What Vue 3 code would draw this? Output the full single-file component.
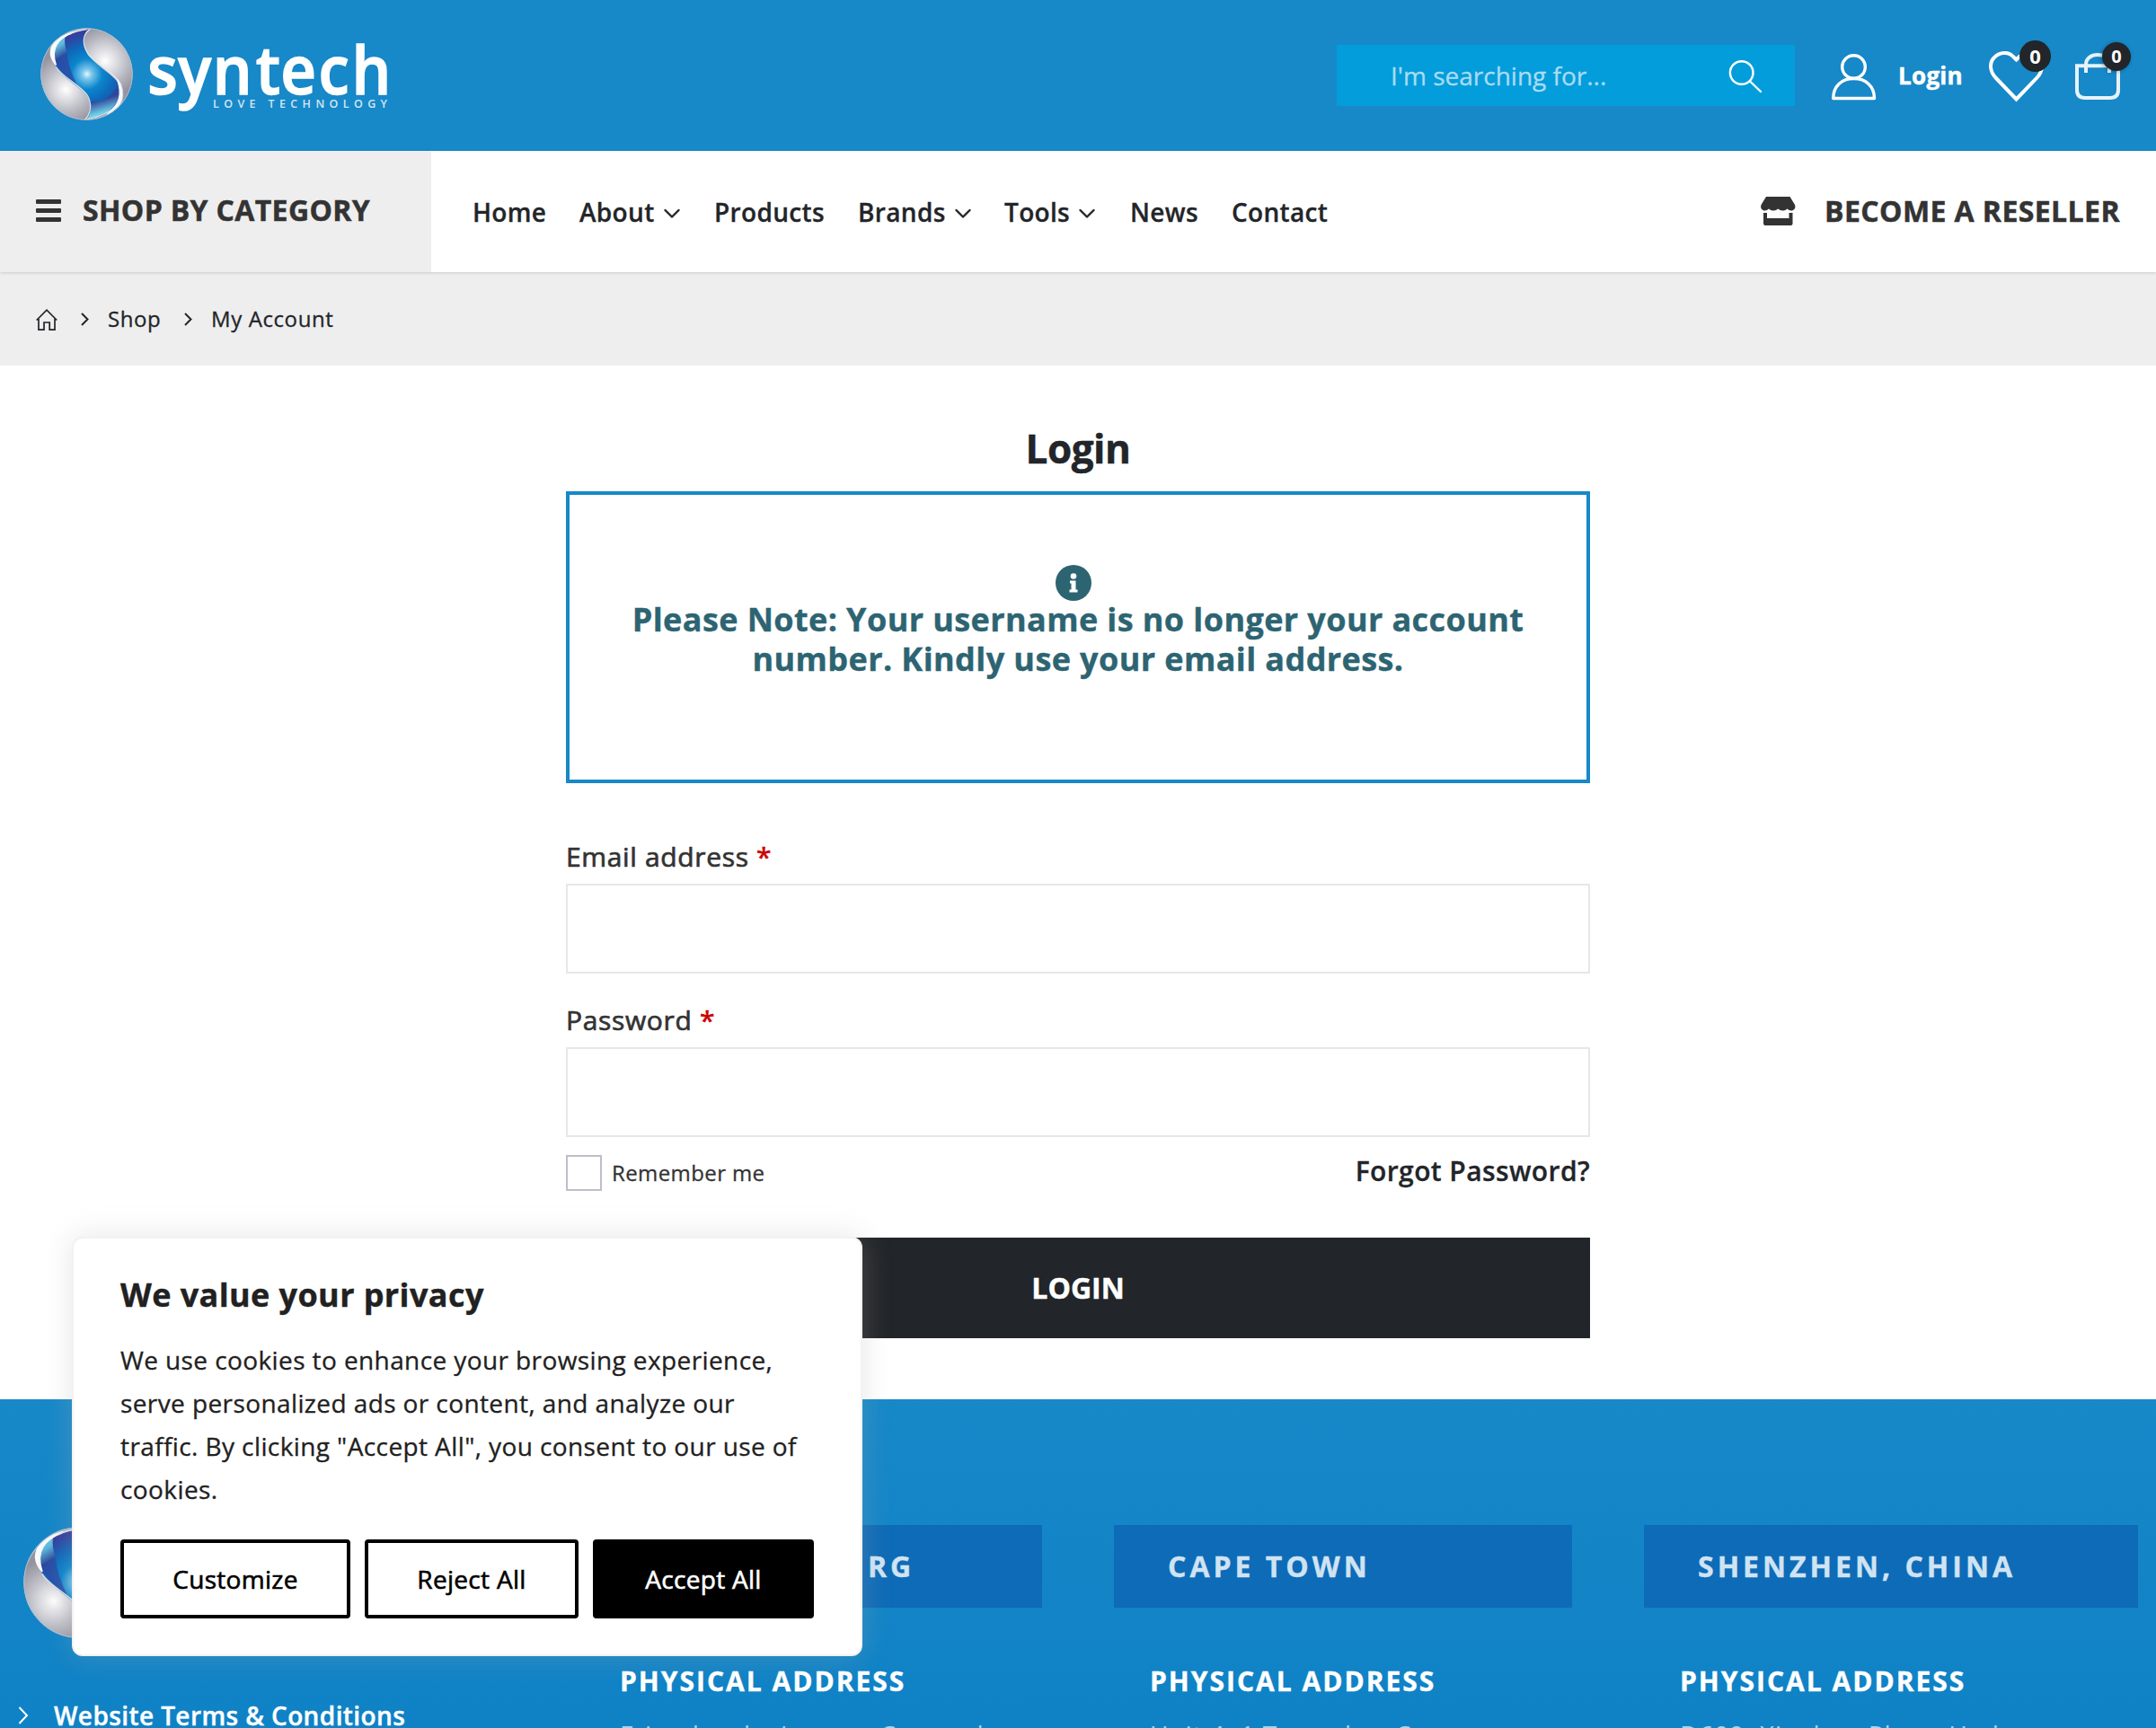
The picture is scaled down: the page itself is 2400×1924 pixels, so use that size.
<script setup>
import { h } from 'vue'

const navItems = [
  { label: 'Home', width: 119 },
  { label: 'About', width: 150, menu: true },
  { label: 'Products', width: 160 },
  { label: 'Brands', width: 163, menu: true },
  { label: 'Tools', width: 140, menu: true },
  { label: 'News', width: 113 },
  { label: 'Contact', width: 110 },
]

const offices = [
  { city: 'JOHANNESBURG', line: 'Friendsanke Inverse Coursed' },
  { city: 'CAPE TOWN', line: 'Unit 4, 1 Topaz law Cor' },
  { city: 'SHENZHEN, CHINA', line: 'D609, Xinghua Plaza, Hed', wide: true },
]

const fields = ['Email address', 'Password']

/* Glossy sphere used in the header and in the footer */
const Sphere = (props) =>
  h('svg', { viewBox: '0 0 308 308', width: props.size, height: props.size }, [
    h('defs', [
      h('radialGradient', { id: props.uid + 'b', cx: '155', cy: '154', r: '135', gradientUnits: 'userSpaceOnUse' }, [
        h('stop', { offset: '0', 'stop-color': '#e4f6ff' }),
        h('stop', { offset: '.12', 'stop-color': '#7cc6ec' }),
        h('stop', { offset: '.38', 'stop-color': '#0a86cd' }),
        h('stop', { offset: '.7', 'stop-color': '#0f66b8' }),
        h('stop', { offset: '1', 'stop-color': '#343f9e' }),
      ]),
      h('radialGradient', { id: props.uid + 'l', cx: '85', cy: '205', r: '120', gradientUnits: 'userSpaceOnUse' }, [
        h('stop', { offset: '0', 'stop-color': '#ffffff' }),
        h('stop', { offset: '.5', 'stop-color': '#c6c6ce' }),
        h('stop', { offset: '1', 'stop-color': '#94939f' }),
      ]),
      h('radialGradient', { id: props.uid + 'r', cx: '215', cy: '110', r: '120', gradientUnits: 'userSpaceOnUse' }, [
        h('stop', { offset: '0', 'stop-color': '#ffffff' }),
        h('stop', { offset: '.5', 'stop-color': '#c9c9d1' }),
        h('stop', { offset: '1', 'stop-color': '#94939f' }),
      ]),
      h('linearGradient', { id: props.uid + 't', x1: '0', y1: '0', x2: '.3', y2: '1' }, [
        h('stop', { offset: '0', 'stop-color': '#7ed5ea' }),
        h('stop', { offset: '.5', 'stop-color': '#5db8dc' }),
        h('stop', { offset: '1', 'stop-color': '#27388f' }),
      ]),
      h('linearGradient', { id: props.uid + 'u', x1: '.4', y1: '0', x2: '.7', y2: '1' }, [
        h('stop', { offset: '0', 'stop-color': '#343f9e' }),
        h('stop', { offset: '.35', 'stop-color': '#30479c' }),
        h('stop', { offset: '.75', 'stop-color': '#6fd0e6' }),
        h('stop', { offset: '1', 'stop-color': '#7ed5ea' }),
      ]),
    ]),
    h('circle', { cx: 154, cy: 154, r: 153, fill: '#b9b9c2' }),
    h('path', { d: 'M150 6C85 18 42 52 36 90C34 145 95 180 130 205C160 225 172 260 155 304C225 300 268 255 268 205C262 165 200 140 170 100C145 70 140 30 165 4Z', fill: `url(#${props.uid}b)` }),
    h('path', { d: 'M84 22C50 42 36 72 46 108C54 122 68 96 88 84C82 60 78 42 84 22Z', fill: `url(#${props.uid}t)` }),
    h('path', { d: 'M88 84C70 90 54 112 54 118C66 152 108 178 125 196L110 165C96 130 92 110 88 84Z', fill: '#3047a2', opacity: '.75' }),
    h('path', { d: 'M254 200C225 242 190 250 164 244C172 264 168 286 155 304C212 296 262 264 264 214Z', fill: `url(#${props.uid}u)` }),
    h('path', { d: 'M165 4C140 22 138 52 158 86C182 122 250 150 270 190C280 214 276 240 272 250C296 225 307 190 307 154C307 74 240 4 165 4Z', fill: `url(#${props.uid}r)` }),
    h('path', { d: 'M36 62C14 85 1 118 1 154C1 236 68 306 148 307C168 284 170 252 156 228C138 200 76 168 56 135C38 108 32 86 36 62Z', fill: `url(#${props.uid}l)` }),
    h('path', { d: 'M165 4C140 22 138 52 158 86C182 122 250 150 268 190C284 236 250 286 156 304', fill: 'none', stroke: '#dfe6ee', 'stroke-width': 4 }),
    h('path', { d: 'M256 172C284 220 276 262 222 288C266 254 272 220 256 172Z', fill: '#f4f7fb', stroke: '#f4f7fb', 'stroke-width': 4 }),
    h('path', { d: 'M52 130C70 164 140 194 158 228C172 256 168 286 148 306', fill: 'none', stroke: '#dcdfe8', 'stroke-width': 4 }),
    h('path', { d: 'M110 14C60 36 32 64 52 124C14 80 38 34 110 14Z', fill: '#f8fafc', stroke: '#f8fafc', 'stroke-width': 4 }),
    h('path', { d: 'M155 5C132 8 112 13 96 22', fill: 'none', stroke: '#dfe6ee', 'stroke-width': 4 }),
    h('circle', { cx: 154, cy: 154, r: 152, fill: 'none', stroke: '#a9c0d4', 'stroke-width': 2.5 }),
  ])
Sphere.props = ['size', 'uid']
</script>

<template>
  <div class="page">
    <header class="top">
      <div class="logo">
        <Sphere :size="103" uid="h" />
        <svg class="wordmark" width="270" height="90" viewBox="0 0 270 90">
          <text class="name" transform="scale(.92 1)" x="-2 35 77 129 159 205 245" y="64.500" font-size="75">syntech</text>
          <text x="71" y="79.500" font-size="12.5" font-weight="600" textLength="194" opacity=".8">LOVE TECHNOLOGY</text>
        </svg>
      </div>
      <div class="search">
        <span>I'm searching for...</span>
        <svg width="38" height="38" viewBox="0 0 38 38" fill="none" stroke="#fff" stroke-width="2.4" stroke-linecap="round">
          <circle cx="14.7" cy="15" r="12.8" />
          <path d="M24 24.5L36 36" />
        </svg>
      </div>
      <svg class="user" width="52" height="52" viewBox="0 0 52 52" fill="none" stroke="#fff" stroke-width="3.4" stroke-linejoin="round">
        <circle cx="25.5" cy="14.5" r="12.8" />
        <path d="M2.7 49.500C2.700 36 12 27.500 25.500 27.500S48.500 36 48.500 49.500Z" />
      </svg>
      <a class="login-link">Login</a>
      <div class="heart">
        <svg width="62" height="58" viewBox="0 0 62 58" fill="none" stroke="#fff" stroke-width="4">
          <path d="M30.500 53.500L7.500 29.500C1 22.500 0 13 6 7C12 .5 22 .5 27 6L30.500 9.500L34 6C39 .5 49 .5 55 7C61 13 60 22.500 53.500 29.500Z" />
        </svg>
        <b class="badge">0</b>
      </div>
      <div class="bag">
        <svg width="50" height="52" viewBox="0 0 50 52" fill="none" stroke="#e6f2fa" stroke-width="4">
          <path d="M2 14.200H48V41Q48 50 39 50H11Q2 50 2 41Z" />
          <path d="M12 22V13C12 6 18 2 25 2S38 6 38 13V22" />
        </svg>
        <b class="badge small">0</b>
      </div>
    </header>

    <div class="menu">
      <div class="category">
        <svg width="28" height="26" viewBox="0 0 28 26" fill="#333">
          <rect width="28" height="5" rx="1" /><rect y="10" width="28" height="5" rx="1" /><rect y="20" width="28" height="5" rx="1" />
        </svg>
        <span>SHOP BY CATEGORY</span>
      </div>
      <nav>
        <a v-for="n in navItems" :key="n.label" :style="{ width: n.width + 'px' }">
          {{ n.label }}
          <svg v-if="n.menu" width="18" height="12" viewBox="0 0 18 12" fill="none" stroke="#222529" stroke-width="2.4" stroke-linecap="round" stroke-linejoin="round">
            <path d="M1.500 2L9 9.500L16.500 2" />
          </svg>
        </a>
      </nav>
      <a class="reseller">
        <svg width="39" height="33" viewBox="0 0 39 33" fill="#333">
          <path d="M6 0H32.500L38 9Q39.500 14 35 15.500Q32 16 29.500 13.500Q27 16 24.300 15.500Q21.500 15.500 19.300 13.500Q17 15.500 14.500 15.500Q11.500 16 9 13.500Q6.500 16 3.500 15.500Q-1 14 .5 9Z" />
          <path d="M3 18H7V24H31.500V18H35.500V30Q35.500 32 33.500 32H5Q3 32 3 30Z" />
        </svg>
        <span>BECOME A RESELLER</span>
      </a>
    </div>

    <div class="crumbs">
      <svg width="24" height="24" viewBox="0 0 24 24" fill="none" stroke="#222529" stroke-width="1.700">
        <path d="M.7 12.500L12 1.200L23.300 12.500M3 11V23.200H9V15H15.200V23.200H21V11" />
      </svg>
      <svg class="sep" width="9" height="15" viewBox="0 0 9 15" fill="none" stroke="#222529" stroke-width="2"><path d="M1 1L7.500 7.500L1 14" /></svg>
      <span class="shop">Shop</span>
      <svg class="sep" width="9" height="15" viewBox="0 0 9 15" fill="none" stroke="#222529" stroke-width="2"><path d="M1 1L7.500 7.500L1 14" /></svg>
      <span>My Account</span>
    </div>

    <main>
      <h1>Login</h1>
      <div class="notice">
        <svg width="40" height="40" viewBox="0 0 40 40">
          <circle cx="20" cy="20" r="20" fill="#2d6472" />
          <circle cx="20" cy="12.500" r="3.300" fill="#fff" />
          <path d="M16 17.500H22.500V27.500H24.500V30.500H15.500V27.500H17.500V20.500H16Z" fill="#fff" />
        </svg>
        <p>Please Note: Your username is no longer your account<br />number. Kindly use your email address.</p>
      </div>
      <label v-for="f in fields" :key="f" class="field">
        <span>{{ f }} <i>*</i></span>
        <input type="text" />
      </label>
      <div class="options">
        <span class="check"></span>
        <span class="remember">Remember me</span>
        <a>Forgot Password?</a>
      </div>
      <button class="submit">LOGIN</button>
    </main>

    <footer>
      <div class="about">
        <Sphere :size="124" uid="f" />
        <a>
          <svg width="12" height="20" viewBox="0 0 12 20" fill="none" stroke="#fff" stroke-width="2"><path d="M1.500 1L10 10L1.500 19" /></svg>
          Website Terms &amp; Conditions
        </a>
      </div>
      <section v-for="o in offices" :key="o.city" :class="{ wide: o.wide }">
        <h2>{{ o.city }}</h2>
        <h3>PHYSICAL ADDRESS</h3>
        <p>{{ o.line }}</p>
      </section>
    </footer>

    <div class="consent">
      <h4>We value your privacy</h4>
      <p>We use cookies to enhance your browsing experience,<br />serve personalized ads or content, and analyze our<br />traffic. By clicking "Accept All", you consent to our use of<br />cookies.</p>
      <div class="actions">
        <button class="customize">Customize</button>
        <button class="reject">Reject All</button>
        <button class="accept">Accept All</button>
      </div>
    </div>
  </div>
</template>

<style>
body { margin: 0; }
</style>

<style scoped>
* { box-sizing: border-box; }
.page { position: relative; width: 2400px; height: 1924px; overflow: hidden; background: #fff; color: #222529; font-family: "Open Sans", sans-serif; white-space: nowrap; }
svg { display: block; flex: none; }
h1, h2, h3, h4, p { margin: 0; }
button { font-family: inherit; padding: 0; }

.top { display: flex; align-items: flex-start; height: 168px; background: #1788c8; color: #fff; }
.logo { display: flex; margin: 31px 0 0 45px; }
.wordmark { margin: 9px 0 0 18px; fill: #fff; overflow: visible; }
.wordmark .name { font-weight: 600; stroke: #fff; stroke-width: 1.5px; }
.search { display: flex; justify-content: space-between; width: 510px; height: 68px; margin: 50px 0 0 1052px; padding: 16px 36px 0 60px; background: #049ddb; }
.search span { margin-top: -1px; font-size: 28px; line-height: 38px; color: #a9dcf3; -webkit-text-stroke: .3px; }
.user { margin: 60px 0 0 40px; }
.login-link { width: 100px; margin: 66px 0 0 23px; font-size: 26px; line-height: 36px; font-weight: 700; letter-spacing: .3px; -webkit-text-stroke: .5px; }
.heart { position: relative; width: 62px; margin: 57px 0 0 1px; }
.bag { position: relative; margin: 59px 0 0 34px; }
.badge { position: absolute; left: 34px; top: -12px; width: 35px; height: 35px; border-radius: 50%; background: #222529; font-size: 22px; line-height: 35px; font-weight: 700; text-align: center; }
.badge.small { left: 30px; top: -12px; width: 32px; height: 32px; line-height: 32px; font-size: 20px; box-shadow: -1px 1px 4px rgba(0, 0, 0, .3); }

.menu { position: relative; display: flex; align-items: flex-start; height: 135px; box-shadow: 0 1px 3px rgba(0, 0, 0, .15); background: #fff; }
.category { display: flex; width: 480px; height: 135px; padding: 54px 0 0 40px; background: #eee; color: #333; }
.category span { margin: -10px 0 0 24px; font-size: 32px; line-height: 44px; font-weight: 700; letter-spacing: .35px; -webkit-text-stroke: .5px; }
nav { display: flex; margin: 48px 0 0 46px; font-size: 28px; line-height: 40px; font-weight: 600; letter-spacing: .33px; -webkit-text-stroke: .3px; }
nav a { display: flex; align-items: center; gap: 10px; }
nav svg { margin-top: 3px; }
.reseller { display: flex; margin: 51px 40px 0 auto; color: #333; }
.reseller span { margin: -6px 0 0 32px; font-size: 32px; line-height: 44px; font-weight: 700; letter-spacing: .42px; -webkit-text-stroke: .5px; }

.crumbs { display: flex; height: 104px; padding: 41px 0 0 40px; background: #eee; font-size: 24px; line-height: 24px; letter-spacing: .6px; -webkit-text-stroke: .3px; }
.crumbs span { margin-top: -1px; }
.crumbs .sep { margin: 4px 21px 0 26px; }
.crumbs .shop { width: 59px; }

main { width: 1140px; height: 1151px; margin: 0 auto; padding-top: 62px; }
h1 { font-size: 44px; line-height: 60px; font-weight: 700; text-align: center; letter-spacing: -.5px; -webkit-text-stroke: .5px; }
.notice { height: 325px; margin-top: 18px; padding-top: 78px; border: 4px solid #1788c8; color: #2d6472; text-align: center; }
.notice svg { margin-left: 541px; }
.notice p { margin-top: -1px; font-size: 36px; line-height: 44px; font-weight: 700; letter-spacing: .4px; -webkit-text-stroke: .4px; }
.field { display: block; height: 182px; }
.notice + .field { margin-top: 58px; }
.field span { display: block; font-size: 30px; line-height: 48px; font-weight: 500; color: #333; letter-spacing: .65px; -webkit-text-stroke: .7px; }
.field i { font-style: normal; color: #c00; }
.field input { display: block; width: 1140px; height: 100px; margin-top: 6px; border: 2px solid #e7e7e7; }
.options { display: flex; margin-top: -8px; height: 92px; }
.check { width: 40px; height: 40px; border: 2px solid #c0bcca; }
.remember { margin: 4px 0 0 11px; font-size: 24px; line-height: 32px; color: #333; letter-spacing: .4px; -webkit-text-stroke: .3px; }
.options a { margin: -2px 0 0 auto; font-size: 30px; line-height: 40px; font-weight: 600; letter-spacing: .4px; -webkit-text-stroke: .3px; }
.submit { display: block; width: 1140px; height: 112px; padding-bottom: 2px; border: 0; background: #222529; color: #fff; font-size: 32px; font-weight: 700; -webkit-text-stroke: .5px; }

footer { display: flex; height: 366px; padding-top: 140px; background: linear-gradient(#1788c8, #0f82c6); color: #fff; }
.about { width: 650px; padding: 2px 0 0 26px; }
.about a { display: flex; align-items: center; margin: 66px 0 0 -6px; font-size: 28px; line-height: 40px; font-weight: 600; gap: 28px; letter-spacing: .4px; -webkit-text-stroke: .4px; }
section { width: 510px; margin-right: 80px; flex: none; }
section.wide { width: 550px; margin-right: 0; }
h2 { height: 92px; padding-left: 60px; background: #0e6bb7; color: #d0e3f3; font-size: 32px; line-height: 92px; font-weight: 700; letter-spacing: 4px; -webkit-text-stroke: .4px; }
h3 { margin: 60px 0 0 40px; font-size: 30px; line-height: 44px; font-weight: 700; letter-spacing: 2px; -webkit-text-stroke: .4px; }
section p { margin: 17px 0 0 40px; font-size: 28px; line-height: 40px; letter-spacing: 1px; color: #a5d4ee; }

.consent { position: absolute; left: 80px; top: 1377px; width: 880px; height: 467px; padding: 35px 0 0 52px; background: #fff; border: 2px solid #f2f2f2; border-radius: 12px; box-shadow: 0 0 32px rgba(172, 171, 171, .3); color: #212121; }
.consent h4 { font-size: 36px; line-height: 56px; font-weight: 700; letter-spacing: .4px; -webkit-text-stroke: .4px; }
.consent p { margin-top: 20px; font-size: 28px; line-height: 48px; letter-spacing: .4px; -webkit-text-stroke: .3px; }
.actions { display: flex; gap: 16px; margin-top: 32px; }
.actions button { height: 88px; border: 4px solid #000; border-radius: 4px; background: #fff; color: #000; font-size: 28px; font-weight: 500; letter-spacing: .3px; -webkit-text-stroke: .6px; }
.actions .customize { width: 256px; }
.actions .reject { width: 238px; }
.actions .accept { width: 246px; background: #000; color: #fff; }
</style>
